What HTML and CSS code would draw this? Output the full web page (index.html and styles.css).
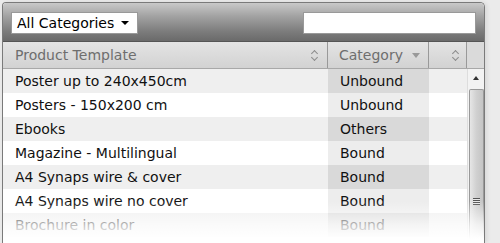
FILE: index.html
```html
<!DOCTYPE html>
<html lang="en">
<head>
  <meta charset="UTF-8" />
  <title>Product Templates</title>
  <link rel="stylesheet" href="styles.css">
</head>
<body>
  <div class="panel">
    <!-- Barra de filtros -->
    <div class="toolbar">
      <div class="select">
        <span>All Categories</span>
        <span class="caret"></span>
      </div>
      <div class="search"></div>
    </div>

    <!-- Cabecera de la tabla -->
    <div class="header">
      <div class="th">Product Template <span class="sort"></span></div>
      <div class="th th-cat">Category <span class="drop"></span></div>
      <div class="th th-last"><span class="sort"></span></div>
      <div class="th-gap"></div>
    </div>

    <div class="body">
      <div class="rows">
        <div class="row"><div class="td">Poster up to 240x450cm</div><div class="td cat">Unbound</div><div class="td"></div></div>
        <div class="row"><div class="td">Posters - 150x200 cm</div><div class="td cat">Unbound</div><div class="td"></div></div>
        <div class="row"><div class="td">Ebooks</div><div class="td cat">Others</div><div class="td"></div></div>
        <div class="row"><div class="td">Magazine - Multilingual</div><div class="td cat">Bound</div><div class="td"></div></div>
        <div class="row"><div class="td">A4 Synaps wire &amp; cover</div><div class="td cat">Bound</div><div class="td"></div></div>
        <div class="row"><div class="td">A4 Synaps wire no cover</div><div class="td cat">Bound</div><div class="td"></div></div>
        <div class="row"><div class="td">Brochure in color</div><div class="td cat">Bound</div><div class="td"></div></div>
      </div>
      <div class="scrollbar">
        <div class="arrow"></div>
        <div class="thumb"><span class="grip"></span></div>
      </div>
    </div>

    <div class="fade"></div>
  </div>
</body>
</html>
```

FILE: styles.css
```css
html, body {
  height: 243px;
  overflow: hidden;
}

body {
  margin: 0;
  width: 500px;
  background: #ebebeb;
  font-family: "DejaVu Sans", Verdana, sans-serif;
  font-size: 14px;
}

.panel {
  position: relative;
  margin: 2px 0 0 2px;
  width: 481px;
  height: 240px;
  border: 1px solid #7a7a7a;
  border-bottom: 0;
  border-radius: 4px 5px 0 0;
  background: #fff;
  overflow: hidden;
  box-shadow: 2px 0 4px rgba(0, 0, 0, 0.08);
}

/* Barra superior */
.toolbar {
  height: 38px;
  display: flex;
  align-items: center;
  justify-content: space-between;
  padding: 0 8px 0 8px;
  background: linear-gradient(#c9c9c9, #a2a2a2 35%, #7c7c7c 75%, #6a6a6a);
  border-bottom: 1px solid #555;
}

.select {
  width: 127px;
  height: 22px;
  margin-top: 1px;
  background: #fff;
  border: 1px solid #999;
  display: flex;
  align-items: center;
  justify-content: space-between;
  padding: 0 8px 0 5px;
  box-sizing: border-box;
  color: #000;
}

.caret {
  width: 0;
  height: 0;
  border-left: 4px solid transparent;
  border-right: 4px solid transparent;
  border-top: 4px solid #000;
}

.search {
  width: 173px;
  height: 22px;
  margin-top: 1px;
  background: #fff;
  border: 1px solid #999;
  box-sizing: border-box;
}

/* Cabecera */
.header {
  display: flex;
  height: 26px;
  background: linear-gradient(#e4e4e4, #d2d2d2);
  border-bottom: 1px solid #a8a8a8;
  color: #6e6e6e;
}

.th {
  display: flex;
  align-items: center;
  justify-content: space-between;
  padding: 0 8px 0 12px;
  width: 325px;
  box-sizing: border-box;
  border-right: 1px solid #999;
}

.th-cat {
  width: 101px;
  padding: 0 8px 0 11px;
}

.th-last {
  width: 38px;
  justify-content: flex-end;
  padding-right: 6px;
}

.th-gap {
  flex: 1;
  background: #dadada;
}

.sort {
  width: 8px;
  height: 11px;
  position: relative;
}

.sort::before,
.sort::after {
  content: "";
  position: absolute;
  left: 1px;
  width: 4px;
  height: 4px;
  border-left: 1.5px solid #8c8c8c;
  border-top: 1.5px solid #8c8c8c;
}

.sort::before {
  top: 1px;
  transform: rotate(45deg);
}

.sort::after {
  bottom: 1px;
  transform: rotate(-135deg);
}

.drop {
  width: 0;
  height: 0;
  border-left: 4px solid transparent;
  border-right: 4px solid transparent;
  border-top: 5px solid #999;
}

/* Filas */
.body {
  display: flex;
}

.rows {
  width: 464px;
}

.row {
  display: flex;
  height: 24px;
  line-height: 24px;
  color: #111;
  background: #fff;
}

.row:nth-child(odd) {
  background: #efefef;
}

.td {
  padding-left: 12px;
  width: 325px;
  box-sizing: border-box;
  white-space: nowrap;
}

.td.cat {
  width: 101px;
  padding-left: 12px;
  background: #ededed;
}

.row:nth-child(odd) .td.cat {
  background: #d9d9d9;
}

.td:last-child {
  width: 38px;
  padding: 0;
}

.scrollbar {
  width: 17px;
  height: 175px;
  background: #f3f3f3;
  border-left: 1px solid #ddd;
  display: flex;
  flex-direction: column;
  align-items: center;
}

.arrow {
  margin-top: 7px;
  width: 0;
  height: 0;
  border-left: 3px solid transparent;
  border-right: 3px solid transparent;
  border-bottom: 4px solid #333;
}

.thumb {
  margin-top: 9px;
  width: 15px;
  flex: 1;
  border: 1px solid #999;
  border-bottom: 0;
  border-radius: 2px 2px 0 0;
  box-sizing: border-box;
  background: linear-gradient(90deg, #e6e6e6, #d0d0d0 50%, #c4c4c4);
  display: flex;
  justify-content: center;
  padding-top: 108px;
}

.grip {
  width: 7px;
  height: 7px;
  background: repeating-linear-gradient(#555 0 1px, #e8e8e8 1px 2px);
}

/* Desvanecido inferior */
.fade {
  position: absolute;
  left: 0;
  right: 0;
  bottom: 0;
  height: 42px;
  background: linear-gradient(rgba(255, 255, 255, 0), rgba(255, 255, 255, 0.7) 55%, #fff 90%);
}
```
